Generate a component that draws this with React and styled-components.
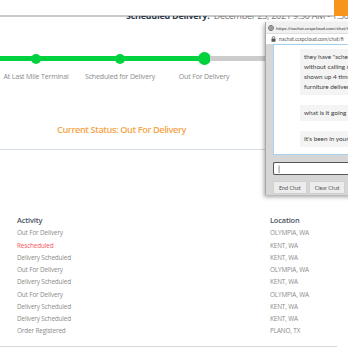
import React from "react";
import styled, { createGlobalStyle } from "styled-components";

const Global = createGlobalStyle`
  html, body { margin: 0; padding: 0; background: #fff; }
  body { width: 348px; height: 348px; overflow: hidden; font-family: "Open Sans", "Liberation Sans", sans-serif; }
  #root { position: relative; width: 348px; height: 348px; overflow: hidden; }
`;

const Page = styled.div`
  display: flex;
  flex-direction: column;
  width: 348px;
`;

const TopBar = styled.div`
  display: flex;
  height: 16px;
`;
const TopBarFill = styled.div`
  flex: 1;
  border-bottom: 2px solid #c9c9c9;
  box-sizing: border-box;
  height: 17px;
`;
const OrangeTab = styled.div`
  width: 14px;
  height: 16px;
  background: #f7941d;
`;

const ScheduledStrip = styled.div`
  height: 5px;
  overflow: hidden;
  padding-left: 126px;
  white-space: nowrap;
`;
const ScheduledText = styled.div`
  margin-top: -6px;
  font-size: 9px;
  line-height: 11px;
  color: #777;
  letter-spacing: -0.25px;
  b { color: #2f3b4c; font-weight: 700; }
`;

const Steps = styled.div`
  display: flex;
  margin-top: 31px;
  margin-left: -6px;
`;
const Step = styled.div`
  width: 84px;
  flex: none;
  display: flex;
  flex-direction: column;
  align-items: center;
`;
const Rail = styled.div`
  display: flex;
  align-items: center;
  width: 100%;
  height: 13px;
`;
const Seg = styled.div`
  flex: 1;
  height: 5px;
  background: ${(p) => (p.$done ? "#00d13f" : "#cccccc")};
`;
const Dot = styled.div`
  flex: none;
  width: ${(p) => (p.$current ? 13 : 10)}px;
  height: ${(p) => (p.$current ? 13 : 10)}px;
  border-radius: 50%;
  background: ${(p) => (p.$done ? "#00d13f" : "#cccccc")};
  margin: 0 -1px;
`;
const StepLabel = styled.div`
  margin-top: 7px;
  font-size: 7px;
  line-height: 9px;
  color: #8a8a8a;
  white-space: nowrap;
  letter-spacing: -0.15px;
`;

const Status = styled.div`
  margin-top: 42px;
  padding-left: 57px;
  font-size: 9.2px;
  line-height: 14px;
  font-weight: 600;
  color: #f7a54a;
  letter-spacing: -0.4px;
`;

const Rule = styled.div`
  margin-top: 12px;
  height: 1px;
  background: #d3dce8;
`;

const Table = styled.div`
  margin-top: 65px;
  display: grid;
  grid-template-columns: 253px 1fr;
  grid-auto-rows: 12.25px;
  padding-left: 17px;
`;
const Head = styled.div`
  font-size: 7.4px;
  line-height: 11px;
  height: 13px;
  font-weight: 600;
  color: #4a5160;
  letter-spacing: -0.15px;
`;
const Cell = styled.div`
  font-size: 6.4px;
  line-height: 12.25px;
  color: ${(p) => (p.$alert ? "#f4555b" : "#8a8a8a")};
  white-space: nowrap;
  letter-spacing: -0.15px;
`;

const BottomRule = styled.div`
  margin-top: 8px;
  width: 337px;
  height: 1px;
  background: #d8d8d8;
`;

/* Chat popup window (overlay) */
const ChatWindow = styled.div`
  position: absolute;
  left: 265px;
  top: 22px;
  width: 100px;
  height: 173px;
  background: #d6d6d6;
  border-left: 1px solid #a9a9a9;
  box-shadow: -1px 2px 4px rgba(0,0,0,0.35);
  display: flex;
  flex-direction: column;
  font-family: Lato, "Open Sans", sans-serif;
`;
const TitleBar = styled.div`
  height: 11px;
  background: #f1f1f1;
  display: flex;
  align-items: center;
  gap: 2px;
  padding-left: 2px;
  font-size: 4.6px;
  color: #333;
  white-space: nowrap;
  border-bottom: 1px solid #dedede;
`;
const UrlBar = styled.div`
  height: 10px;
  background: #fff;
  display: flex;
  align-items: center;
  gap: 3px;
  padding-left: 5px;
  font-size: 5px;
  color: #555;
  white-space: nowrap;
`;
const ChatBody = styled.div`
  flex: 1;
  display: flex;
  flex-direction: column;
  padding: 0 0 0 7px;
`;
const Log = styled.div`
  height: 111px;
  background: #fff;
  border: 1px solid #a7d0ee;
  border-right: none;
  box-sizing: border-box;
  display: flex;
  flex-direction: column;
  gap: 10px;
  padding: 4px 0 0 26px;
`;
const Bubble = styled.div`
  background: #f4f4f4;
  padding: 3px 0 3px 4px;
  font-size: 6.4px;
  line-height: 10px;
  color: #3a3a3a;
  white-space: nowrap;
  overflow: hidden;
`;
const Input = styled.div`
  margin-top: 7px;
  height: 13px;
  border: 1px solid #555;
  border-right: none;
  border-radius: 2px 0 0 2px;
  background: #fff;
  box-sizing: border-box;
  display: flex;
  align-items: center;
  padding-left: 4px;
  font-size: 8px;
  color: #333;
`;
const Buttons = styled.div`
  margin-top: 6px;
  display: flex;
  gap: 2px;
`;
const Btn = styled.div`
  height: 13px;
  padding: 0 5px;
  background: #ececec;
  border: 1px solid #d0d0d0;
  border-radius: 1px;
  box-sizing: border-box;
  display: flex;
  align-items: center;
  font-size: 5.4px;
  color: #555;
`;

const Globe = () => (
  <svg width="6" height="6" viewBox="0 0 12 12">
    <circle cx="6" cy="6" r="5" fill="none" stroke="#444" strokeWidth="1.4" />
    <path d="M1 6h10M6 1c-2.5 3-2.5 7 0 10M6 1c2.5 3 2.5 7 0 10" fill="none" stroke="#444" strokeWidth="1" />
  </svg>
);
const Lock = () => (
  <svg width="5" height="6" viewBox="0 0 10 12">
    <path d="M2.5 5V3.5a2.5 2.5 0 0 1 5 0V5" fill="none" stroke="#555" strokeWidth="1.5" />
    <rect x="1" y="5" width="8" height="6.5" rx="1" fill="#555" />
  </svg>
);

const steps = [
  { label: "At Last Mile Terminal", left: true, dot: true, right: true },
  { label: "Scheduled for Delivery", left: true, dot: true, right: true },
  { label: "Out For Delivery", left: true, dot: true, right: false, current: true },
  { label: "Delivered", left: false, dot: false, right: false },
];

const rows = [
  ["Out For Delivery", "OLYMPIA, WA"],
  ["Rescheduled", "KENT, WA", true],
  ["Delivery Scheduled", "KENT, WA"],
  ["Out For Delivery", "OLYMPIA, WA"],
  ["Delivery Scheduled", "KENT, WA"],
  ["Out For Delivery", "OLYMPIA, WA"],
  ["Delivery Scheduled", "KENT, WA"],
  ["Delivery Scheduled", "KENT, WA"],
  ["Order Registered", "PLANO, TX"],
];

export default function App() {
  return (
    <>
      <Global />
      <Page>
        <TopBar>
          <TopBarFill />
          <OrangeTab />
        </TopBar>
        <ScheduledStrip>
          <ScheduledText>
            <b>Scheduled Delivery:</b>&nbsp; December 23, 2021 9:30 AM - 1:30 PM
          </ScheduledText>
        </ScheduledStrip>
        <Steps>
          {steps.map((s) => (
            <Step key={s.label}>
              <Rail>
                <Seg $done={s.left} />
                <Dot $done={s.dot} $current={s.current} />
                <Seg $done={s.right} />
              </Rail>
              <StepLabel>{s.label}</StepLabel>
            </Step>
          ))}
        </Steps>
        <Status>Current Status: Out For Delivery</Status>
        <Rule />
        <Table>
          <Head>Activity</Head>
          <Head>Location</Head>
          {rows.map(([a, l, alert], i) => (
            <React.Fragment key={i}>
              <Cell $alert={alert}>{a}</Cell>
              <Cell>{l}</Cell>
            </React.Fragment>
          ))}
        </Table>
        <BottomRule />
      </Page>
      <ChatWindow>
        <TitleBar>
          <Globe />
          <span>https://nachat.ccspcloud.com/chat/fi</span>
        </TitleBar>
        <UrlBar>
          <Lock />
          <span>nachat.ccspcloud.com/chat/fi</span>
        </UrlBar>
        <ChatBody>
          <Log>
            <Bubble>
              they have "scheduled<br />
              without calling me<br />
              shown up 4 times<br />
              furniture delivery
            </Bubble>
            <Bubble>what is it going to</Bubble>
            <Bubble>It's been in your t</Bubble>
          </Log>
          <Input>|</Input>
          <Buttons>
            <Btn>End Chat</Btn>
            <Btn>Clear Chat</Btn>
          </Buttons>
        </ChatBody>
      </ChatWindow>
    </>
  );
}
